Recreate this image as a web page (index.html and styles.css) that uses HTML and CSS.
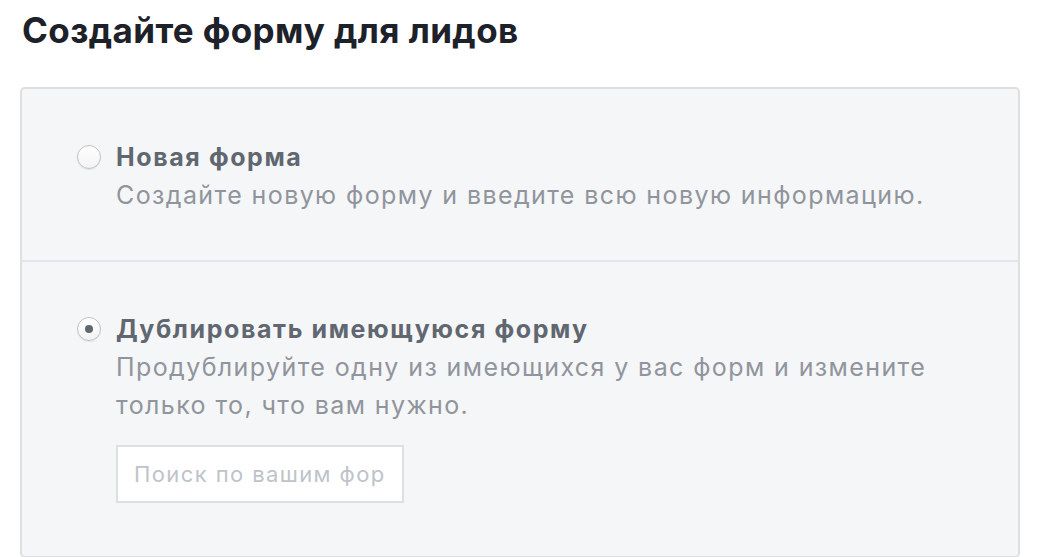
FILE: index.html
```html
<!DOCTYPE html>
<html lang="ru">
<head>
<meta charset="utf-8">
<link rel="stylesheet" href="styles.css">
</head>
<body>
<h1 class="title">Создайте форму для лидов</h1>
<div class="panel">
  <div class="option">
    <span class="radio"></span>
    <div class="option-body">
      <div class="label">Новая форма</div>
      <div class="desc">Создайте новую форму и введите всю новую информацию.</div>
    </div>
  </div>
  <div class="option option-second">
    <span class="radio radio-checked"></span>
    <div class="option-body">
      <div class="label">Дублировать имеющуюся форму</div>
      <div class="desc">Продублируйте одну из имеющихся у вас форм и измените<br>только то, что вам нужно.</div>
      <input class="search" type="text" placeholder="Поиск по вашим формам">
    </div>
  </div>
</div>
</body>
</html>
```
FILE: styles.css
```css
html, body {
  margin: 0;
  padding: 0;
  background: #ffffff;
}
body {
  padding: 0 30px 0 20px;
  font-family: Inter, "Liberation Sans", Arial, sans-serif;
  overflow: hidden;
  height: 557px;
}
.title {
  margin: 0;
  padding: 10px 0 0 2px;
  height: 87px;
  box-sizing: border-box;
  font-size: 35px;
  line-height: 40px;
  font-weight: bold;
  letter-spacing: 0.4px;
  color: #1d2129;
}
.panel {
  background: #f5f6f7;
  border: 2px solid #dddfe2;
  border-radius: 5px;
  height: 471px;
  box-sizing: border-box;
}
.option {
  display: flex;
  align-items: flex-start;
  padding: 49px 20px 46px 55px;
}
.option-second {
  border-top: 2px solid #e3e5e8;
  padding-top: 48px;
}
.radio {
  flex: none;
  width: 22px;
  height: 22px;
  margin-top: 7px;
  margin-right: 15px;
  border: 1px solid #bec2c9;
  border-radius: 50%;
  background: linear-gradient(#ffffff, #f3f3f3);
  box-shadow: 0 1px 1px rgba(0,0,0,0.08);
  position: relative;
}
.radio-checked::after {
  content: "";
  position: absolute;
  left: 7px;
  top: 7px;
  width: 8px;
  height: 8px;
  border-radius: 50%;
  background: #606770;
}
.option-body {
  flex: 1;
}
.label {
  font-size: 25px;
  line-height: 38px;
  font-weight: 700;
  letter-spacing: 1.6px;
  color: #606770;
}
.desc {
  font-size: 25px;
  line-height: 38px;
  letter-spacing: 1.4px;
  color: #90949c;
}
.search {
  display: block;
  margin-top: 21px;
  width: 288px;
  height: 58px;
  box-sizing: border-box;
  border: 2px solid #dddfe2;
  border-radius: 0;
  background: #ffffff;
  padding: 0 17px 0 16px;
  font-family: Inter, "Liberation Sans", Arial, sans-serif;
  font-size: 22px;
  letter-spacing: 1.4px;
  color: #1d2129;
  outline: none;
}
.search::placeholder {
  color: #bec3c9;
  opacity: 1;
}
```
